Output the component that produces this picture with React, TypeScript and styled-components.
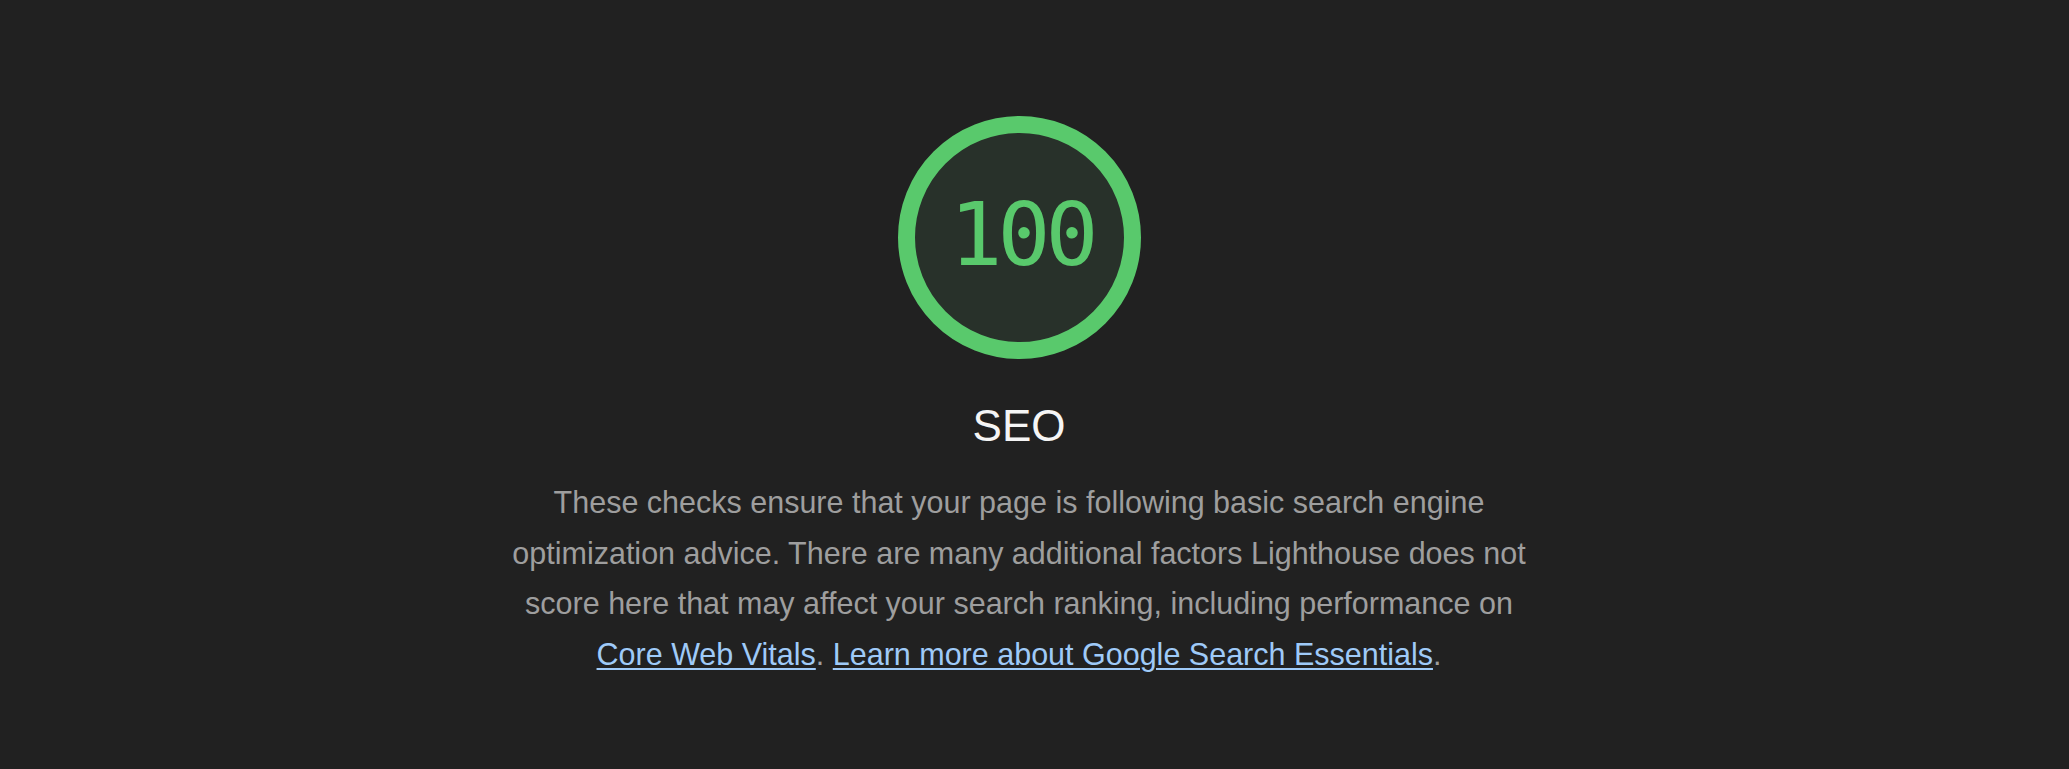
import React from "react";
import styled, { createGlobalStyle } from "styled-components";

const GlobalStyle = createGlobalStyle`
	html, body {
		margin: 0;
		padding: 0;
		background: #212121;
	}
	body {
		font-family: "Liberation Sans", Arial, Helvetica, sans-serif;
	}
`;

const Page = styled.main`
	min-height: 769px;
	display: flex;
	flex-direction: column;
	align-items: center;
	padding: 116px 31px 0 0;
	box-sizing: border-box;
`;

const Gauge = styled.div`
	width: 243px;
	height: 243px;
	box-sizing: border-box;
	border-radius: 50%;
	border: 17px solid #59c96c;
	background: #28312a;
	display: flex;
	align-items: center;
	justify-content: center;
`;

const Score = styled.span`
	font-family: "DejaVu Sans Mono", "Liberation Mono", monospace;
	font-variant-numeric: slashed-zero;
	font-size: 88px;
	letter-spacing: -5px;
	margin-right: -5px;
	line-height: 1;
	color: #59c96c;
	margin-top: -6px;
`;

const Title = styled.h2`
	margin: 41px 0 0;
	font-size: 44px;
	line-height: 52px;
	font-weight: 400;
	color: #f5f5f5;
`;

const Description = styled.p`
	margin: 25px 0 0;
	max-width: 1040px;
	text-align: center;
	font-size: 30.5px;
	line-height: 50.7px;
	color: #9e9e9e;
`;

const Link = styled.a`
	color: #9fcaf8;
	text-decoration: underline;
	text-decoration-thickness: 2px;
	text-underline-offset: 3px;
`;

const App: React.FC = () => {
	return (
		<>
			<GlobalStyle />
			<Page>
				<Gauge>
					<Score>100</Score>
				</Gauge>
				<Title>SEO</Title>
				<Description>
					These checks ensure that your page is following basic search engine
					optimization advice. There are many additional factors Lighthouse does
					not score here that may affect your search ranking, including
					performance on <Link href="#">Core Web Vitals</Link>.{" "}
					<Link href="#">Learn more about Google Search Essentials</Link>.
				</Description>
			</Page>
		</>
	);
};

export default App;
